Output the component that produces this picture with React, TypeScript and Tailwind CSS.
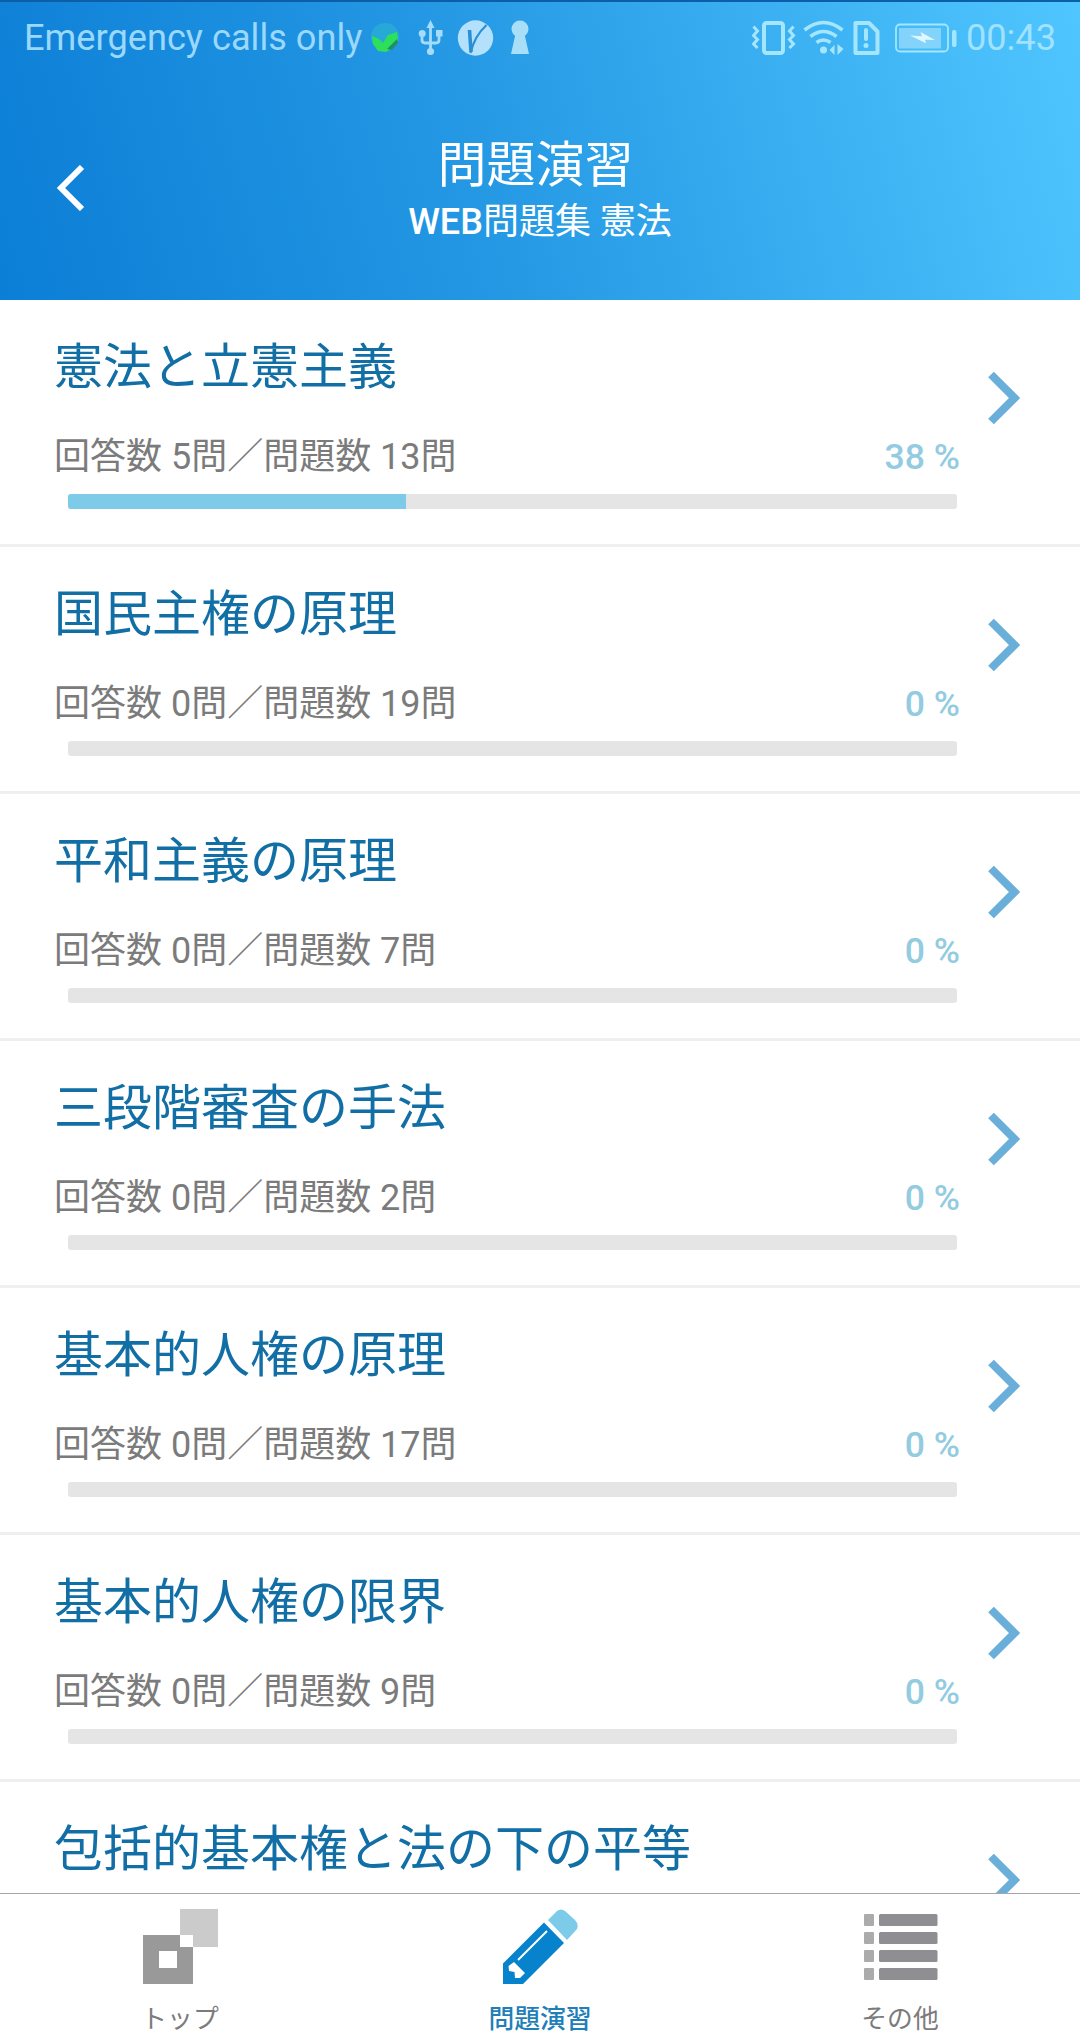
import type { ReactNode } from 'react';

type Progress = { answered: number; total: number; percent: number };
type Chapter = { title: string; progress?: Progress };

const chapters: Chapter[] = [
  { title: '憲法と立憲主義', progress: { answered: 5, total: 13, percent: 38 } },
  { title: '国民主権の原理', progress: { answered: 0, total: 19, percent: 0 } },
  { title: '平和主義の原理', progress: { answered: 0, total: 7, percent: 0 } },
  { title: '三段階審査の手法', progress: { answered: 0, total: 2, percent: 0 } },
  { title: '基本的人権の原理', progress: { answered: 0, total: 17, percent: 0 } },
  { title: '基本的人権の限界', progress: { answered: 0, total: 9, percent: 0 } },
  { title: '包括的基本権と法の下の平等' },
];

function StatusBar() {
  return (
    <div className="flex h-[74px] shrink-0 items-center justify-between border-t-2 border-[#0b5fa8] pl-[24px] pr-[24px] text-[36.2px] leading-none">
      <div className="flex items-center text-[#9ad8fc]">
        <span className="w-[347px] whitespace-nowrap">Emergency calls only</span>
        <svg width="160" height="36" viewBox="0 0 160 36">
          {/* messenger badge */}
          <circle cx="14" cy="17" r="14" fill="#27a9d8" />
          <path d="M1 16l7 3 4 4 5-8 9-3 1 8-5 8-7 4-8-1-5-7z" fill="#2ce05a" />
          <path d="M16 29l10-10 1 4-6 7z" fill="#1f8f6b" />
          {/* usb */}
          <g fill="none" stroke="#a5dcfb" strokeWidth="2.8">
            <path d="M59.5 6v25M51 14v6q0 3 3 3h11q3 0 3-3v-6" />
          </g>
          <path d="M59.5 0l4 8h-8z" fill="#a5dcfb" />
          <circle cx="59.5" cy="31.5" r="3.6" fill="#a5dcfb" />
          <circle cx="51.2" cy="13.5" r="3.5" fill="#a5dcfb" />
          <rect x="65" y="10" width="6.5" height="6.5" fill="#a5dcfb" />
          {/* round V badge */}
          <circle cx="104.5" cy="18" r="17.7" fill="#b3e0fb" />
          <path d="M98.500 10l1.500 22" fill="none" stroke="#2a8fd6" strokeWidth="3.6" />
          <path d="M99.500 33q4-17 16-28" fill="none" stroke="#2a8fd6" strokeWidth="2.2" />
          {/* keyhole */}
          <circle cx="149" cy="9" r="8.5" fill="#a9def9" />
          <path d="M144.5 14h9l4.5 20h-18z" fill="#a9def9" />
        </svg>
      </div>
      <div className="flex items-center text-[#a0e2ff]">
        <svg width="205" height="36" viewBox="0 0 205 36" className="mr-[9px]">
          {/* vibrate */}
          <rect x="12" y="3" width="19" height="30" rx="2.5" fill="none" stroke="#a5e6ff" strokeWidth="4" />
          <path
            d="M1.500 6.500l4 4.500-4 4.500 4 4-4 4.500 4 4M41.500 6.500l-4 4.500 4 4.500-4 4 4 4.500-4 4"
            fill="none"
            stroke="#a5e6ff"
            strokeWidth="3"
          />
          {/* wifi */}
          <g fill="none" stroke="#a5e6ff" strokeWidth="3.6">
            <path d="M52.500 10q19-15 38 0M58.500 16.500q13-10 26 0M64.500 22.500q7-5 14 0" />
          </g>
          <circle cx="71.5" cy="30" r="3.5" fill="#a5e6ff" />
          <path d="M77.5 30l5-5v10zM91.5 29l-6-5v11z" fill="#a5e6ff" />
          {/* sim warning */}
          <path d="M103.500 3h13.500l8.500 8.5V33h-22z" fill="none" stroke="#a5e6ff" strokeWidth="4" strokeLinejoin="round" />
          <path d="M114 10v9" stroke="#a5e6ff" strokeWidth="4" strokeLinecap="round" />
          <circle cx="114" cy="25.5" r="2.5" fill="#a5e6ff" />
          {/* battery */}
          <rect x="144" y="4.5" width="52" height="27" rx="4" fill="none" stroke="#a5e6ff" strokeWidth="1.8" />
          <rect x="147" y="8" width="42" height="20.5" fill="#84d3fb" />
          <path d="M158 15.500l12 .8-1.5-4.300L183 20l-10-.3 1 3.600z" fill="#e0f7ff" />
          <rect x="200" y="10" width="4.5" height="17" rx="2" fill="#a5e6ff" />
        </svg>
        <span>00:43</span>
      </div>
    </div>
  );
}

function Header() {
  return (
    <header className="flex h-[300px] shrink-0 flex-col bg-[linear-gradient(75deg,#0b7ed6_0%,#2599e4_45%,#50c6ff_100%)] text-white">
      <StatusBar />
      <div className="flex flex-1">
        <button className="flex w-[200px] pl-[56px] pt-[91px]" aria-label="戻る">
          <svg width="30" height="46" viewBox="0 0 30 46">
            <path d="M26 2L5 23l21 21" fill="none" stroke="#fff" strokeWidth="6" />
          </svg>
        </button>
        <div className="flex flex-1 flex-col items-center pt-[65px]">
          <h1 className="mr-[9px] text-[49px] leading-[54px]">問題演習</h1>
          <p className="mt-[7px] text-[36px] leading-[44px]">
            <span className="font-medium">WEB</span>問題集 憲法
          </p>
        </div>
        <div className="w-[200px]" />
      </div>
    </header>
  );
}

function ChapterRow({ title, progress }: Chapter) {
  return (
    <li className="flex h-[247px] shrink-0 border-b-[3px] border-[#efefef] pl-[54px]">
      <div className="w-[906px] pt-[43px]">
        <h2 className="text-[49px] leading-[50px] text-[#116fa6]">{title}</h2>
        {progress && (
          <>
            <div className="mt-[44px] flex justify-between text-[36px] leading-[40px]">
              <span className="text-[#7b7b7b]">
                回答数 {progress.answered}問／問題数 {progress.total}問
              </span>
              <span className="text-[35.6px] font-medium text-[#93cbe0]">{progress.percent} %</span>
            </div>
            <div className="mt-[17px] ml-[14px] h-[15px] w-[889px] overflow-hidden rounded-[3px] bg-[#e5e5e5]">
              <div className="h-full bg-[#7ecbe9]" style={{ width: `${progress.percent}%` }} />
            </div>
          </>
        )}
      </div>
      <svg width="36" height="56" viewBox="0 0 36 56" className="mt-[70px] ml-[25px]">
        <path d="M6 4.500L29.500 28 6 51.500" fill="none" stroke="#6aaeda" strokeWidth="8" />
      </svg>
    </li>
  );
}

function Tab({ label, color, children }: { label: string; color: string; children: ReactNode }) {
  return (
    <button className="flex flex-1 flex-col items-center pt-[15px]">
      <svg width="76" height="76" viewBox="0 0 76 76">
        {children}
      </svg>
      <span className={`mt-[18px] text-[25.8px] leading-[32px] ${color}`}>{label}</span>
    </button>
  );
}

function TabBar() {
  return (
    <nav className="flex h-[147px] shrink-0 border-t border-[#a6a6a6] bg-white">
      <Tab label="トップ" color="text-[#7b7b7b]">
        <path d="M38 0h38v38H38z" fill="#cbcbcb" />
        <path d="M1 26h50v49H1z" fill="#999" />
        <path d="M38 26h13v12H38zM17 42h18v17H17z" fill="#fff" />
      </Tab>
      <Tab label="問題演習" color="text-[#1f7fb8] font-medium">
        <path d="M42 13.5L62 34 21 75H1V54.5z" fill="#0782cc" />
        <path d="M45 22L16 51" stroke="#fff" strokeWidth="2" />
        <path d="M12 53l11 11-5 5h-5l-.5-6-5.5-1-.5-5z" fill="#fff" />
        <path d="M46 11l9-9q4-3 8 0l10 9q4 4 2 9L65 31z" fill="#7ccbe8" />
      </Tab>
      <Tab label="その他" color="text-[#7b7b7b]">
        {[5, 23, 41, 59].map(y => (
          <g key={y}>
            <rect x="2" y={y} width="10" height="12" rx="1" fill="#ababab" />
            <rect x="17" y={y} width="58.5" height="12" rx="1.5" fill="#8e8e93" />
          </g>
        ))}
      </Tab>
    </nav>
  );
}

export default function App() {
  return (
    <div className="flex h-[2040px] w-[1080px] flex-col overflow-hidden bg-white font-[Roboto,'Noto_Sans_CJK_JP',sans-serif]">
      <Header />
      <ul className="flex min-h-0 flex-1 flex-col overflow-hidden">
        {chapters.map(chapter => (
          <ChapterRow key={chapter.title} {...chapter} />
        ))}
      </ul>
      <TabBar />
    </div>
  );
}
